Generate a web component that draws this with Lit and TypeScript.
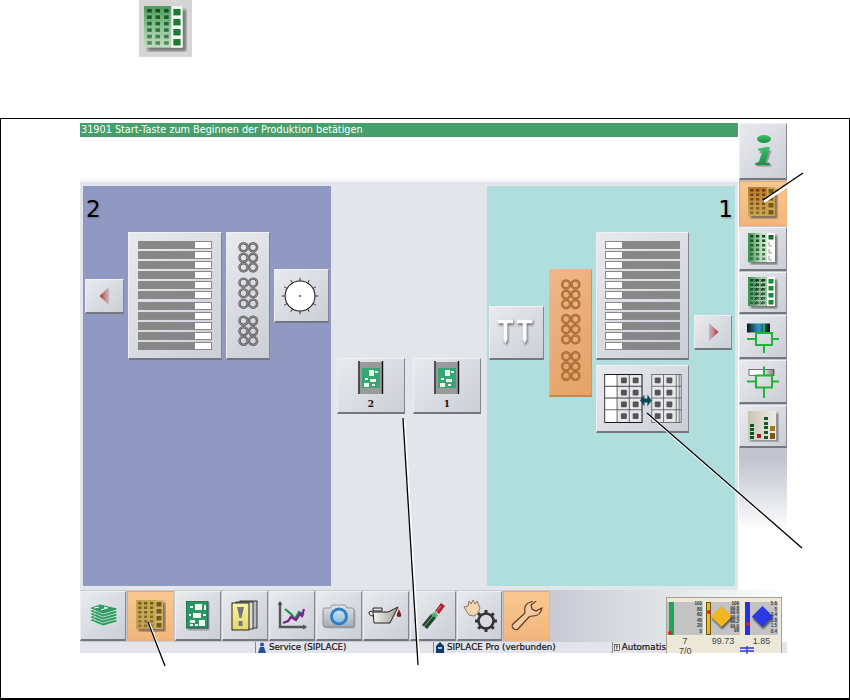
import { LitElement, html, css, svg } from "lit";
import { customElement } from "lit/decorators.js";

const range = (n: number) => Array.from({ length: n }, (_, i) => i);

type Kind = "green" | "orange" | "tan" | "split" | "cross";
const PAL: Record<Kind, { bg: string; sq: string; right: string; rsq: string }> = {
  green: { bg: "url(#gGreen)", sq: "#14551f", right: "#f4f6f2", rsq: "#1d7a33" },
  orange: { bg: "url(#gOrange)", sq: "#6e3d0c", right: "#c8a65c", rsq: "#7c5a14" },
  tan: { bg: "url(#gTan)", sq: "#705a12", right: "#cdb06a", rsq: "#75591a" },
  split: { bg: "url(#gSplit)", sq: "#0f4a1c", right: "#fbfbf7", rsq: "#17692c" },
  cross: { bg: "url(#gCross)", sq: "#0f4a1c", right: "#fbfbf7", rsq: "#1d8a3a" },
};

function matrix(kind: Kind, w = 30, h = 32) {
  const p = PAL[kind];
  const rows = range(6).map((i) => 2 + i * 4.5);
  const tall = range(4).map((i) => 2 + i * 7);
  return html`<svg width=${w} height=${h} viewBox="0 0 30 32">
    <rect x="2.5" y="2.5" width="27" height="29" fill="#444" opacity=".65" filter="url(#soft)"></rect>
    <rect width="27" height="29" fill=${p.bg}></rect>
    <rect x="19" width="8" height="29" fill=${p.right}></rect>
    ${[2.2, 8, 14].map((x) =>
      rows.map(
        (y, i) => svg`<path d="M${x} ${y}h3.200v2.500h-3.200z" fill=${p.sq} fill-opacity=${1 - i * 0.08}></path>`,
      ),
    )}
    ${kind === "cross"
      ? [6.5, 12.5].map((x) =>
          rows.map((y) => svg`<path d="M${x} ${y}l2 3M${x + 2} ${y}l-2 3" stroke="#222" stroke-width=".8"></path>`),
        )
      : ""}
    ${kind === "split"
      ? tall.slice(1).map((y) => svg`<path d="M21 ${y}v4h3" stroke="#888" stroke-width=".8" fill="none"></path>`)
      : ""}
    ${(kind === "split" ? tall.slice(0, 1) : tall).map(
      (y) => svg`<rect x="20.5" y=${y} width="5" height="4.500" fill=${p.rsq}></rect>`,
    )}
  </svg>`;
}

const rings = (color: string, inner: string) => {
  const ys = [13, 24, 34, 50, 61, 72, 90, 101, 111];
  return html`<svg width="44" height="128" viewBox="0 0 44 128">
    ${ys.map((y) =>
      [17.3, 27.3].map(
        (x) => svg`<circle cx=${x} cy=${y} r="4.200" fill="none" stroke=${color} stroke-width="2.600"></circle>
          <circle cx=${x} cy=${y} r="4.200" fill="none" stroke=${inner} stroke-width=".7"></circle>`,
      ),
    )}
  </svg>`;
};

const dial = html`<svg width="55" height="54" viewBox="0 0 55 54">
  <circle cx="26" cy="27" r="15.500" fill="#fff" stroke="#222" stroke-width="1.100"></circle>
  ${range(12).map((i) => {
    const a = (i * Math.PI) / 6;
    return svg`<line x1=${26 + 15.5 * Math.cos(a)} y1=${27 + 15.5 * Math.sin(a)} x2=${26 + 19 * Math.cos(a)} y2=${27 + 19 * Math.sin(a)} stroke="#333" stroke-width="1"></line>`;
  })}
  <circle cx="26" cy="27" r="1" fill="#444"></circle>
</svg>`;

const tt = html`<svg width="55" height="54" viewBox="0 0 55 54">
  ${[8, 28].map(
    (x) => svg`<path d="M${x + 1} ${15}h16v5h-6v17l-2 4-2-4v-17h-6z" fill="#55585f" opacity=".8" filter="url(#soft)"></path>
      <path d="M${x} ${14}h16v4h-6v17l-2 4-2-4v-17h-6z" fill="#fdfdfd"></path>`,
  )}
</svg>`;

const arrow = (dir: "l" | "r") => html`<svg width="12" height="20" viewBox="0 0 12 20">
  <path d=${dir === "l" ? "M0.5 10L10 1v18z" : "M11.5 10L2 1v18z"} fill=${dir === "l" ? "url(#gArrowL)" : "url(#gArrowR)"}></path>
</svg>`;

const tray = html`<svg width="93" height="68" viewBox="0 0 93 68">
  <rect x="8" y="9" width="38" height="49" fill="#e6e7ea" stroke="#111" stroke-width="1"></rect>
  <rect x="8.5" y="9.5" width="12" height="48" fill="#fff"></rect>
  ${[21, 33].map((y) => svg`<path d="M8 ${y}H46" stroke="#111" stroke-width=".8"></path>`)}
  <path d="M8 45H46M20.500 9v49M33 9v49" stroke="#444" stroke-width=".8"></path>
  ${[24.5, 36.5].map((x) =>
    [12, 24.5, 36.5, 48.5].map((y) => svg`<rect x=${x} y=${y} width="6" height="6" rx="1" fill="#555"></rect>`),
  )}
  <rect x="56" y="9" width="30" height="49" fill="#e6e7ea" stroke="#555" stroke-width=".8"></rect>
  <path d="M56 21H86M56 33H86M56 45H86M68 9v49M81 9v49M84 9v49" stroke="#555" stroke-width=".8"></path>
  ${[59, 71].map((x) =>
    [12, 24.5, 36.5, 48.5].map((y) => svg`<rect x=${x} y=${y} width="6" height="6" rx="1" fill="#555"></rect>`),
  )}
  <path d="M44 35.500l4.500-6v4h3v-4l4.500 6-4.500 6v-4h-3v4z" fill="#0c4a55"></path>
</svg>`;

const pcbTiny = html`<svg width="34" height="36" viewBox="0 0 34 36">
  <rect x="6" y="1" width="22" height="32" fill="#9a9a9a"></rect>
  <path d="M5 0v33M28.500 0v33" stroke="#111" stroke-width="1.400"></path>
  <rect x="8" y="7" width="18" height="20" fill="#38a674"></rect>
  <path d="M15 9h5v6h-5zM11 17h3v2h-3zM16 18h6v3h-6zM10 22h5v4h-5zM18 23h3v2h-3zM21 10h3v2h-3z" fill="#e8f5ec"></path>
</svg>`;

const barsIcon = html`<svg width="31" height="31" viewBox="0 0 31 31">
  <rect x="2" y="2" width="29" height="29" fill="#555" opacity=".55" filter="url(#soft)"></rect>
  <rect width="28" height="29" fill="url(#gBeige)"></rect>
  ${[13, 17, 21, 25].map((y) => svg`<rect x="2" y=${y} width="4" height="3" fill="#0d5a24"></rect>`)}
  ${[6, 11, 15, 20, 25].map((y) => svg`<rect x="16" y=${y} width="4" height="3" fill="#0d5a24"></rect>`)}
  <rect x="9" y="23" width="4" height="4" fill="#a5172b"></rect>
  <rect x="22" y="15" width="5" height="5" fill="#9a7a22"></rect>
  <rect x="22" y="22" width="5" height="6" fill="#7a5a12"></rect>
</svg>`;

const cross = (top: unknown, cy: number) => html`<svg width="36" height="36" viewBox="0 0 36 36">
  ${top}
  <path d="M2 ${cy}H11M27 ${cy}H34M19 ${cy - 15}v9M19 ${cy + 6}v${34 - cy - 6}" stroke="#22b33a" stroke-width="2" fill="none"></path>
  <rect x="11" y=${cy - 6} width="16" height="12" fill="none" stroke="#22b33a" stroke-width="2"></rect>
</svg>`;

const info = html`<svg width="28" height="34" viewBox="0 0 28 34">
  <path d="M17 15h4l-4 12c-.5 2 1 2.500 4 1.500l-.5 2.500H6l.5-2c3-.5 3.500-1 4-3l3-8-4.500-.5.500-2z" fill="#555" opacity=".5" transform="translate(1.500 1.500)"></path>
  <ellipse cx="15" cy="5" rx="7" ry="4" fill="url(#gInfo)"></ellipse>
  <path d="M17 13h4l-4 14c-.5 2 1 2.500 4 1.500l-.5 2.500H6l.5-2c3-.5 3.500-1 4-3l3-9-4.500-.5.500-2z" fill="url(#gInfo)"></path>
</svg>`;

const stack = html`<svg width="30" height="24" viewBox="0 0 30 24">
  ${[12, 9, 6, 3, 0].map(
    (y) => svg`<path d="M1 ${y + 4}L12 ${y}l17 4v2L15 ${y + 10}z" fill="#2f9a62" stroke="#e9f6ec" stroke-width=".7"></path>
      <path d="M6 ${y + 4}l5-1M13 ${y + 6}l6-2M16 ${y + 3}l4 1" stroke="#fff" stroke-width="1"></path>`,
  )}
</svg>`;

const bigPcb = html`<svg width="24" height="30" viewBox="0 0 24 30">
  <rect x="1.500" y="1.500" width="22" height="28" fill="#555" opacity=".5" filter="url(#soft)"></rect>
  <rect width="22" height="27" fill="#2c9668" stroke="#14523a" stroke-width=".8"></rect>
  <path d="M9 3h7v6H9zM4 5h3v2H4zM18 4h2v5h-2zM7 12h8v5H7zM3 13h2v2H3zM17 13h3v2h-3zM4 19h5v3H4zM4 23h3v2H4zM9 23h3v2H9zM13 19h6v6h-6z" fill="#eef8f0"></path>
</svg>`;

const cards = html`<svg width="28" height="31" viewBox="0 0 28 31">
  <rect x="9" y="1" width="17" height="27" fill="#bbb" stroke="#111" stroke-width=".8"></rect>
  <rect x="5" y="2" width="17" height="27" fill="#ddd" stroke="#111" stroke-width=".8"></rect>
  <rect x="1" y="3" width="17" height="27" fill="url(#gYellow)" stroke="#111" stroke-width=".9"></rect>
  <path d="M6 7h7l-2.500 11h-2zM7.500 21h4v5h-4z" fill="#777"></path>
</svg>`;

const chart = html`<svg width="30" height="30" viewBox="0 0 30 30">
  <path d="M3 1v25h26" stroke="#555" stroke-width="2.400" fill="none"></path>
  <path d="M0.500 4L3 0l2.500 4zM26 23.500l4 2.500-4 2.500z" fill="#555"></path>
  <path d="M8 8l6 5 4 5 4-7 5 3" stroke="#1f8f52" stroke-width="2.200" fill="none"></path>
  <path d="M6 22l5-2 3-4 5 3 4-6 2 2 2-7" stroke="#7d1f8f" stroke-width="2.200" fill="none"></path>
</svg>`;

const camera = html`<svg width="34" height="26" viewBox="0 0 34 26">
  <path d="M2 6h7l2-3h12l2 3h7v18H2z" fill="#555" opacity=".45" transform="translate(1 1)" filter="url(#soft)"></path>
  <path d="M1 7q0-2 2-2h5l2-3h13l2 3h5q2 0 2 2v15q0 2-2 2H3q-2 0-2-2z" fill="url(#gCam)" stroke="#777" stroke-width=".7"></path>
  <circle cx="17" cy="13.500" r="9" fill="#2f7fc4"></circle>
  <circle cx="17" cy="13.500" r="6" fill="url(#gLens)"></circle>
</svg>`;

const oil = html`<svg width="36" height="24" viewBox="0 0 36 24">
  <path d="M5 4h9v3H5z" fill="none" stroke="#222" stroke-width="1"></path>
  <path d="M5 8h15l10-5-8 16H6z" fill="url(#gOil)" stroke="#222" stroke-width="1"></path>
  <path d="M5 8q-4-2-4 1t5 3" fill="none" stroke="#222" stroke-width="1"></path>
  <path d="M31 5l2 5q1 3-2 3t-2-3z" fill="#8a1c28"></path>
</svg>`;

const tool = html`<svg width="24" height="28" viewBox="0 0 24 28">
  <path d="M1 23l5 4 9-11-5-4z" fill="#1d4a2a"></path>
  <path d="M10 13l5 3 2-3-4-3z" fill="#30c060"></path>
  <path d="M14 9l4 3 6-8-4-3z" fill="#b4202c"></path>
  <path d="M3 25L20 4" stroke="#9b9b9b" stroke-width="1"></path>
</svg>`;

const gear = html`<svg width="36" height="34" viewBox="0 0 36 34">
  <path d="M2 8l3 5 2 3 5 1 4-3 2-5-3-7-2 3-2-4-2 4-2-3-1 5z" fill="#f3d5b0" stroke="#7a5a3c" stroke-width=".8"></path>
  <circle cx="24" cy="22" r="7.500" fill="#d8dae0" stroke="#333" stroke-width="2.600"></circle>
  ${range(8).map((i) => {
    const a = (i * Math.PI) / 4;
    return svg`<line x1=${24 + 8 * Math.cos(a)} y1=${22 + 8 * Math.sin(a)} x2=${24 + 11 * Math.cos(a)} y2=${22 + 11 * Math.sin(a)} stroke="#333" stroke-width="3"></line>`;
  })}
</svg>`;

const wrench = html`<svg width="32" height="30" viewBox="0 0 32 30">
  <path d="M20 1c-5 1-7 5-6 9 0 1 0 2-1 3L2 23c-1 1-1 3 0 4l1 1c2 1 3 1 4 0L18 16c1-1 3-1 4-1 5 0 8-3 9-8l-6 3-4-2-1-4 5-4c-1-1-3-1-5 1z" fill="#f4c9a2" stroke="#5a3a1c" stroke-width="1.200"></path>
</svg>`;

const person = html`<svg width="10" height="11" viewBox="0 0 10 11">
  <circle cx="5" cy="2.500" r="2" fill="#24509a"></circle>
  <path d="M1 11l2-6h4l2 6z" fill="#24509a"></path>
</svg>`;
const house = html`<svg width="10" height="11" viewBox="0 0 10 11">
  <path d="M5 0l4 4v7H1V4z" fill="#0f3a66"></path><rect x="3" y="5" width="4" height="2" fill="#9cc4e4"></rect>
</svg>`;
const tag = html`<svg width="10" height="11" viewBox="0 0 10 11">
  <rect x=".5" y=".5" width="9" height="10" fill="#fff" stroke="#111"></rect><path d="M2.500 3h5M5 3v6" stroke="#111" stroke-width="1.400"></path>
</svg>`;

const gradient = (id: string, stops: string[], horiz = false) => svg`
  <linearGradient id=${id} x1="0" y1="0" x2=${horiz ? 1 : 0} y2=${horiz ? 0 : 1}>
    ${stops.map((c, i) => svg`<stop offset=${i / (stops.length - 1)} stop-color=${c}></stop>`)}
  </linearGradient>`;

const defs = html`<svg class="defs" width="0" height="0"><defs>
  ${gradient("gGreen", ["#4a9a5c", "#8cc396", "#c3dcc3"])}
  ${gradient("gOrange", ["#b9762c", "#c4934a", "#c4aa4e"])}
  ${gradient("gTan", ["#c0a548", "#c8aa5c", "#c09c50"])}
  ${gradient("gSplit", ["#3a8f4f", "#bfe0c0", "#f3f7f0"], true)}
  ${gradient("gCross", ["#3a8f4f", "#a8cead", "#8fb498"], true)}
  ${gradient("gYellow", ["#fbf4a8", "#e6d66e"])}
  ${gradient("gBeige", ["#c9c4b4", "#dcd9cd", "#ecebe6"], true)}
  ${gradient("gInfo", ["#3cbf6a", "#1f8f4a"])}
  ${gradient("gArrowL", ["#a8262e", "#c97a80", "#bdbdc4"], true)}
  ${gradient("gArrowR", ["#bdbdc4", "#c97a80", "#a8262e"], true)}
  ${gradient("gCam", ["#dfe3e8", "#a4acb8"])}
  ${gradient("gLens", ["#cfe3f4", "#8cbbe0"])}
  ${gradient("gOil", ["#f4f4f2", "#a09c96"], true)}
  ${gradient("gBlueBar", ["#111", "#2e9ac4", "#111"], true)}
  ${gradient("gGreyBar", ["#fff", "#fff", "#777"], true)}
  <filter id="soft" x="-20%" y="-20%" width="140%" height="140%"><feGaussianBlur stdDeviation="1"></feGaussianBlur></filter>
</defs></svg>`;

const sideButtons: { h: number; active?: boolean; icon: unknown }[] = [
  { h: 57, icon: info },
  { h: 45, active: true, icon: matrix("orange") },
  { h: 44, icon: matrix("split") },
  { h: 42, icon: matrix("cross") },
  { h: 44, icon: cross(svg`<rect x="2" y="4.500" width="23" height="9" fill="url(#gBlueBar)"></rect>`, 20) },
  { h: 44, icon: cross(svg`<rect x="4" y="5.500" width="25" height="6" fill="url(#gGreyBar)" stroke="#444" stroke-width=".7"></rect>`, 17.5) },
  { h: 43, icon: barsIcon },
];

const bottomButtons: { w: number; active?: boolean; icon: unknown }[] = [
  { w: 46, icon: stack },
  { w: 47, active: true, icon: matrix("tan") },
  { w: 46, icon: bigPcb },
  { w: 46, icon: cards },
  { w: 46, icon: chart },
  { w: 46, icon: camera },
  { w: 46, icon: oil },
  { w: 46, icon: tool },
  { w: 45, icon: gear },
  { w: 47, active: true, icon: wrench },
];

const gauges = [
  { cls: "g-green", scale: ["100", "80", "60", "40", "20", "0"], marker: 29, diamond: "", value: "7" },
  { cls: "g-yellow", scale: ["100", "99.8", "99.6", "99.4", "99.2", "99.0", "98"], marker: 8, diamond: "#f0b81e", value: "99.73" },
  { cls: "g-blue", scale: ["5.6", "5", "3.4", "1.8", "1.5", "0.4"], marker: 20, diamond: "#2a3ae0", value: "1.85" },
];

@customElement("app-root")
export class AppRoot extends LitElement {
  static styles = css`
    :host { display: block; width: 850px; height: 700px; background: #fff; position: relative; overflow: hidden;
      font-family: "DejaVu Sans", sans-serif; }
    .defs { position: absolute; }
    .head { height: 118px; padding-left: 139px; box-sizing: border-box; }
    .head-icon { width: 53px; height: 57px; background: #d5d5d5; display: flex; align-items: center; justify-content: center; }
    .frame { height: 582px; box-sizing: border-box; border: 1px solid #000; border-bottom-width: 2px; padding: 4px 0 0 79px; }
    .screen { width: 707px; display: flex; flex-direction: column; }
    .upper { display: flex; gap: 1px; height: 467px; }
    .main { width: 658px; display: flex; flex-direction: column; }
    .msg { height: 14px; line-height: 14px; background: #45a06c; color: #fff; font-size: 9.700px; padding-left: 1px; white-space: nowrap; }
    .msg-space { height: 45px; background: linear-gradient(#fff 90%, #f1f2f4); }
    .panels { height: 408px; background: #e2e5ea; display: flex; padding: 4px 3px; box-sizing: border-box; }
    .panel { width: 248px; display: flex; flex-direction: column; }
    .panel.l { background: #8f99c2; }
    .panel.r { background: #b0dedd; }
    .label { height: 46px; line-height: 46px; font-size: 23px; color: #000; text-shadow: 1px 1px 2px #5557; padding: 0 3px; }
    .panel.r .label { text-align: right; padding-right: 2px; }
    .row { display: flex; align-items: center; gap: 4px; padding-left: 2px; }
    .row.l { height: 128px; }
    .row.r { height: 201px; }
    .center { width: 156px; display: flex; gap: 8px; padding: 172px 0 0 6px; box-sizing: border-box; }
    .btn { box-sizing: border-box; display: flex; align-items: center; justify-content: center; flex: none;
      background: linear-gradient(135deg, #e8eaee, #cbced6);
      border-top: 1px solid #f0f1f4; border-left: 1px solid #eceef1; border-right: 1px solid #84878f; border-bottom: 2px solid #74777f; }
    .btn.on { background: linear-gradient(#f8c890, #f2b67c); border-color: #e8a86c #f2b67c #f0b27a #e8a86c; }
    .arrow-l { width: 39px; height: 35px; }
    .arrow-r { width: 38px; height: 35px; margin-left: 1px; }
    .feeder { width: 94px; height: 128px; padding: 8px 9px; flex-direction: column; justify-content: space-between; align-items: stretch; }
    .feeder.rt { width: 93px; padding: 8px 8px; }
    .bar { height: 8px; background: #878787; display: flex; justify-content: flex-end; border: 1px solid #8a8a8a; box-sizing: border-box; }
    .bar i { width: 16px; background: #fff; display: block; }
    .rt .bar { justify-content: flex-start; }
    .nozzle { width: 44px; height: 128px; }
    .nozzle.orange { background: linear-gradient(135deg, #f0b68a, #e3a266); border-color: #f0b68a #d89458 #c9854a #f0b68a; width: 43px; }
    .dial, .tt { width: 55px; height: 54px; }
    .tt { margin-right: 1px; }
    .rcol { display: flex; flex-direction: column; gap: 5px; }
    .pcbtray { width: 93px; height: 68px; }
    .mid { width: 68px; height: 56px; flex-direction: column; justify-content: flex-start; padding-top: 2px; }
    .mid b { font: bold 9px/14px "DejaVu Serif", serif; color: #111; }
    .side { width: 48px; display: flex; flex-direction: column; gap: 1px; background: linear-gradient(#c2c5d0 0, #c2c5d0 72%, #e4e6ea 81%, #fff 87%); height: 467px; }
    .side .btn { width: 48px; }
    .bottom { height: 52px; padding-top: 1px; box-sizing: border-box; display: flex; gap: 1px; background: linear-gradient(90deg, #c6c9d3 0, #c6c9d3 66%, #e0e2e6 82%, #fff 100%); }
    .bottom .btn { height: 50px; }
    .status { height: 11px; background: #e2e4ea; display: flex; padding-left: 175px; font-size: 8.700px; line-height: 11px; color: #111; white-space: nowrap; font-weight: 400; }
    .cell { display: flex; align-items: center; gap: 2px; border-left: 1px solid #888; padding-left: 1px; box-sizing: border-box; -webkit-text-stroke: .2px #111; }
    .cell.a { width: 178px; } .cell.b { width: 179px; } .cell.c { width: 54px; overflow: hidden; }
    .widget { position: absolute; left: 666px; top: 597px; width: 116px; height: 56px; box-sizing: border-box; background: #ece9d8;
      border: 1px solid #a5a294; border-bottom: 0; padding: 4px 0 0 0; font-family: "Liberation Sans", sans-serif; color: #444; }
    .gauges { display: flex; gap: 3px; }
    .gauge { width: 36px; height: 33px; background: #c3c3c3; position: relative; display: flex; justify-content: flex-end; }
    .gauge.g-yellow { width: 34px; }
    .gauge.g-blue { width: 33px; margin-left: 2px; }
    .strip { position: absolute; left: 2px; top: 0; bottom: 0; width: 5px; }
    .g-green .strip { background: #1ea35c; }
    .g-yellow .strip { background: #f0b81e; border: 1px solid #6a5a10; box-sizing: border-box; left: 0; }
    .g-blue .strip { background: #2a30e0; left: 0; }
    .marker { position: absolute; left: 1px; width: 4px; height: 4px; border-radius: 50%; background: #d6262a; }
    .scale { position: relative; display: flex; flex-direction: column; justify-content: space-between; font-size: 4.500px; line-height: 4.500px; text-align: right; padding: 0 1px 0 0; height: 32px; font-weight: bold; color: #333; }
    .dia { position: absolute; left: 8px; top: 7px; width: 15px; height: 15px; transform: rotate(45deg); box-shadow: 2px 1px 2px #555; }
    .g-blue .dia { left: 10px; }
    .vals { display: flex; gap: 3px; font-size: 9px; line-height: 10px; height: 10px; text-align: center; margin-top: 1px; }
    .vals span { width: 36px; }
    .vals span:nth-child(2) { width: 34px; }
    .vals span:nth-child(3) { width: 33px; margin-left: 2px; }
    .foot { display: flex; font-size: 9px; line-height: 10px; height: 10px; padding-left: 12px; }
    .foot svg { margin-left: 48px; }
    .notes { position: absolute; inset: 0; pointer-events: none; }
  `;

  private feeders(rt: boolean) {
    return html`<div class="btn feeder ${rt ? "rt" : ""}">
      ${range(11).map(() => html`<div class="bar"><i></i></div>`)}
    </div>`;
  }

  render() {
    const notes: number[][] = [
      [803, 173, 763, 200],
      [802, 548, 647, 413],
      [148, 622, 165, 666],
      [403, 418, 418, 665],
    ];
    return html`
      ${defs}
      <div class="head"><div class="head-icon">${matrix("green", 43, 46)}</div></div>
      <div class="frame">
        <div class="screen">
          <div class="upper">
            <div class="main">
              <div class="msg">31901 Start-Taste zum Beginnen der Produktion betätigen</div>
              <div class="msg-space"></div>
              <div class="panels">
                <section class="panel l">
                  <div class="label">2</div>
                  <div class="row l">
                    <div class="btn arrow-l">${arrow("l")}</div>
                    ${this.feeders(false)}
                    <div class="btn nozzle">${rings("#5f5f5f", "#a8a8a8")}</div>
                    <div class="btn dial">${dial}</div>
                  </div>
                </section>
                <section class="center">
                  <div class="btn mid">${pcbTiny}<b>2</b></div>
                  <div class="btn mid">${pcbTiny}<b>1</b></div>
                </section>
                <section class="panel r">
                  <div class="label">1</div>
                  <div class="row r">
                    <div class="btn tt">${tt}</div>
                    <div class="btn nozzle orange">${rings("#a5662c", "#c98f52")}</div>
                    <div class="rcol">
                      ${this.feeders(true)}
                      <div class="btn pcbtray">${tray}</div>
                    </div>
                    <div class="btn arrow-r">${arrow("r")}</div>
                  </div>
                </section>
              </div>
            </div>
            <nav class="side">
              ${sideButtons.map(
                (b) => html`<div class="btn ${b.active ? "on" : ""}" style="height:${b.h}px">${b.icon}</div>`,
              )}
            </nav>
          </div>
          <div class="bottom">
            ${bottomButtons.map(
              (b) => html`<div class="btn ${b.active ? "on" : ""}" style="width:${b.w}px">${b.icon}</div>`,
            )}
          </div>
          <div class="status">
            <div class="cell a">${person}<span>Service (SIPLACE)</span></div>
            <div class="cell b">${house}<span>SIPLACE Pro (verbunden)</span></div>
            <div class="cell c">${tag}<span>Automatis</span></div>
          </div>
        </div>
      </div>
      <div class="widget">
        <div class="gauges">
          ${gauges.map(
            (g) => html`<div class="gauge ${g.cls}">
              <div class="strip"></div>
              <div class="marker" style="top:${g.marker}px"></div>
              ${g.diamond ? html`<div class="dia" style="background:${g.diamond}"></div>` : ""}
              <div class="scale">${g.scale.map((s) => html`<span>${s}</span>`)}</div>
            </div>`,
          )}
        </div>
        <div class="vals">${gauges.map((g) => html`<span>${g.value}</span>`)}</div>
        <div class="foot">
          <span>7/0</span>
          <svg width="14" height="8" viewBox="0 0 14 8"><path d="M0 2h14M0 5h14M7 0v8" stroke="#2a3ae0" stroke-width="1.300"></path></svg>
        </div>
      </div>
      <svg class="notes" width="850" height="700">
        ${notes.map(
          ([a, b, c, d]) => svg`
            <line x1=${a + 1.2} y1=${b + 1.6} x2=${c + 1.2} y2=${d + 1.6} stroke="#fff" stroke-width="2.500"></line>
            <line x1=${a} y1=${b} x2=${c} y2=${d} stroke="#000" stroke-width="1.300"></line>`,
        )}
      </svg>
    `;
  }
}
